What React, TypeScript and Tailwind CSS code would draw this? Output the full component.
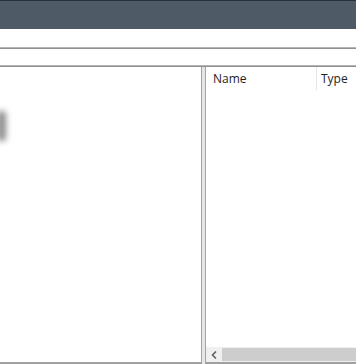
export default function App() {
  return (
    <div
      className="w-[356px] h-[364px] flex flex-col bg-white overflow-hidden text-[12px] text-[#1e1e1e]"
      style={{ fontFamily: '"Open Sans", "Noto Sans", sans-serif' }}
    >
      {/* title bar */}
      <div className="h-[29px] shrink-0 bg-[#4f5a67] border-t border-[#2a3038]" />
      {/* toolbar strips */}
      <div className="h-[18px] shrink-0 bg-white" />
      <div className="h-[2px] shrink-0 bg-[#b4b4b4] border-b border-[#8f8f8f]" />
      <div className="h-[16px] shrink-0 bg-white" />
      <div className="h-[2px] shrink-0 bg-[#b4b4b4] border-b border-[#8f8f8f]" />

      {/* panes */}
      <div className="flex-1 flex min-h-0">
        <div className="w-[201px] shrink-0 flex flex-col border-b-2 border-[#a0a0a0] bg-white">
          <div className="pt-[44px]">
            <div className="w-[9px] h-[30px] -ml-[3px] bg-[#8a8a8a] blur-[3px] rounded-sm" />
          </div>
        </div>

        <div className="w-[5px] shrink-0 border-x border-[#a3a3a3] bg-[#e6e6e6]" />

        <div className="flex-1 flex flex-col min-w-0 border-b-2 border-[#a0a0a0]">
          <div className="h-[23px] shrink-0 flex">
            <div className="w-[111px] shrink-0 pl-[7px] pt-[3px] border-r border-[#e5e5e5]">Name</div>
            <div className="pl-[4px] pt-[3px]">Type</div>
          </div>
          <div className="flex-1" />
          <div className="h-[15px] shrink-0 flex bg-[#f0f0f0]">
            <div className="w-[16px] flex items-center justify-center">
              <svg width="7" height="8" viewBox="0 0 7 8">
                <path d="M5 0.5 L1.5 4 L5 7.5" fill="none" stroke="#606060" strokeWidth="1.6" />
              </svg>
            </div>
            <div className="flex-1 my-[1px] bg-[#cdcdcd]" />
          </div>
        </div>
      </div>
    </div>
  );
}
